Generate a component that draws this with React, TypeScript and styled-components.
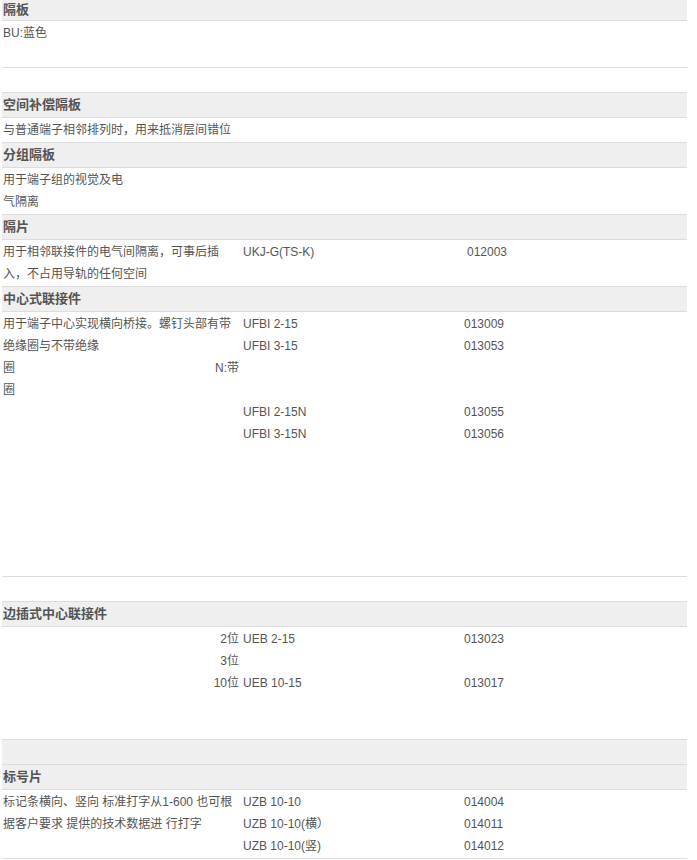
import styled, { createGlobalStyle } from "styled-components";

const GlobalStyle = createGlobalStyle`
  body {
    margin: 0;
    background: #ffffff;
    font-family: "Liberation Sans", "Noto Sans CJK SC", Arial, sans-serif;
  }
`;

const Table = styled.div`
  width: 685px;
  margin-left: 2px;
  color: #555555;
  font-size: 12px;
`;

const Header = styled.div<{ $first?: boolean }>`
  height: ${(p) => (p.$first ? 20 : 24)}px;
  line-height: ${(p) => (p.$first ? 20 : 24)}px;
  padding-left: 1px;
  background: #efefef;
  border-bottom: 1px solid #dddddd;
  font-size: 13px;
  font-weight: bold;
  color: #555555;
  white-space: nowrap;
`;

const Row = styled.div<{ $h?: number }>`
  display: grid;
  grid-template-columns: 240px 221px 224px;
  min-height: ${(p) => p.$h ?? 24}px;
  border-bottom: 1px solid #dddddd;
`;

const Cell = styled.div<{ $indent?: number }>`
  padding: 1px 1px 1px ${(p) => 1 + (p.$indent ?? 0)}px;
  display: flex;
  flex-direction: column;
`;

const Line = styled.div<{ $right?: boolean }>`
  display: flex;
  justify-content: ${(p) => (p.$right ? "flex-end" : "space-between")};
  height: 22px;
  line-height: 22px;
  white-space: nowrap;
  padding-right: ${(p) => (p.$right ? "2px" : "0")};
`;

const Tail = styled.span`
  padding-right: 2px;
`;

type L = string | { t: string; right?: boolean; tail?: string };

function Lines({ items, indent }: { items: L[]; indent?: number }) {
  return (
    <Cell $indent={indent}>
      {items.map((it, i) =>
        typeof it === "string" ? (
          <Line key={i}>{it}</Line>
        ) : (
          <Line key={i} $right={it.right}>
            <span>{it.t}</span>
            {it.tail && <Tail>{it.tail}</Tail>}
          </Line>
        )
      )}
    </Cell>
  );
}

export default function App() {
  return (
    <>
      <GlobalStyle />
      <Table>
        <Header $first>隔板</Header>
        <Row $h={46}>
          <Lines items={["BU:蓝色"]} />
          <Lines items={[]} />
          <Lines items={[]} />
        </Row>
        <Row>
          <Lines items={[]} />
          <Lines items={[]} />
          <Lines items={[]} />
        </Row>

        <Header>空间补偿隔板</Header>
        <Row>
          <Lines items={["与普通端子相邻排列时，用来抵消层间错位"]} />
          <Lines items={[]} />
          <Lines items={[]} />
        </Row>

        <Header>分组隔板</Header>
        <Row>
          <Lines items={["用于端子组的视觉及电", "气隔离"]} />
          <Lines items={[]} />
          <Lines items={[]} />
        </Row>

        <Header>隔片</Header>
        <Row>
          <Lines items={["用于相邻联接件的电气间隔离，可事后插", "入，不占用导轨的任何空间"]} />
          <Lines items={["UKJ-G(TS-K)"]} />
          <Lines items={["012003"]} indent={3} />
        </Row>

        <Header>中心式联接件</Header>
        <Row $h={264}>
          <Lines
            items={[
              "用于端子中心实现横向桥接。螺钉头部有带",
              "绝缘圈与不带绝缘",
              { t: "圈", tail: "N:带" },
              "圈",
            ]}
          />
          <Lines items={["UFBI 2-15", "UFBI 3-15", "", "", "UFBI 2-15N", "UFBI 3-15N"]} />
          <Lines items={["013009", "013053", "", "", "013055", "013056"]} />
        </Row>
        <Row>
          <Lines items={[]} />
          <Lines items={[]} />
          <Lines items={[]} />
        </Row>

        <Header>边插式中心联接件</Header>
        <Row $h={112}>
          <Lines
            items={[
              { t: "2位", right: true },
              { t: "3位", right: true },
              { t: "10位", right: true },
            ]}
          />
          <Lines items={["UEB 2-15", "", "UEB 10-15"]} />
          <Lines items={["013023", "", "013017"]} />
        </Row>

        <Header />
        <Header>标号片</Header>
        <Row>
          <Lines items={["标记条横向、竖向 标准打字从1-600 也可根", "据客户要求 提供的技术数据进 行打字"]} />
          <Lines items={["UZB 10-10", "UZB 10-10(横）", "UZB 10-10(竖)"]} />
          <Lines items={["014004", "014011", "014012"]} />
        </Row>
      </Table>
    </>
  );
}
